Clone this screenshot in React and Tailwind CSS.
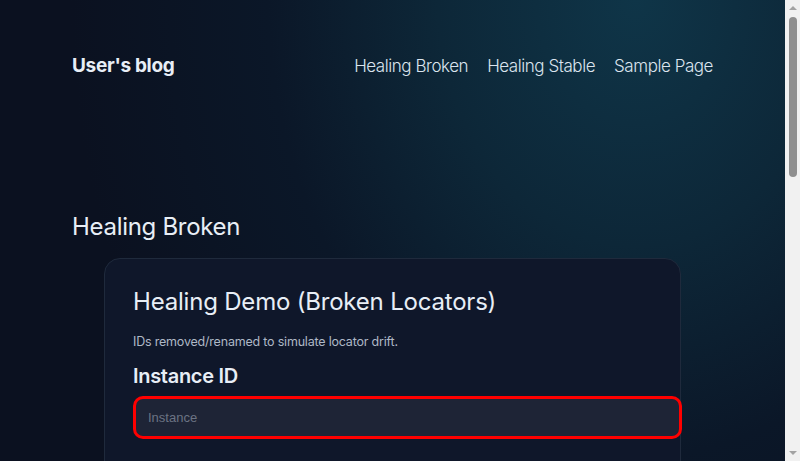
export default function App() {
  return (
    <div className="flex h-[461px] overflow-hidden">
      <div className="min-w-0 flex-1 min-h-[900px] bg-[#0b1120] bg-[radial-gradient(ellipse_72%_78%_at_81%_0%,#0f3548_0%,#0d2738_35%,#0b1728_65%,#0b1120_100%)] font-['Inter','Noto_Sans',sans-serif] text-[#e6edf5]">
        <div className="mx-[72px]">
          <header className="flex items-center justify-between h-[133px]">
            <a className="text-[19px] font-bold tracking-[-0.3px] text-[#e8eef6]">User's blog</a>
            <nav className="flex gap-[19px] text-[17px] font-light tracking-[-0.45px] text-[#dbe4ee]">
              <a>Healing Broken</a>
              <a>Healing Stable</a>
              <a>Sample Page</a>
            </nav>
          </header>
          <main className="pt-[76px]">
            <h1 className="text-[24px] font-normal tracking-[-0.3px] leading-[36px] text-[#e8eef6]">Healing Broken</h1>
            <section className="mx-8 mt-[13px] rounded-2xl border border-[#1f2a3c] bg-[#0f172a] px-[28px] pt-[26px] pb-10">
              <h2 className="text-[24px] font-normal tracking-[-0.2px] leading-[34px] text-[#e8eef6]">Healing Demo (Broken Locators)</h2>
              <p className="mt-[14px] text-[12.5px] tracking-[-0.2px] text-[#aeb8c6]">IDs removed/renamed to simulate locator drift.</p>
              <label className="block mt-[9px] text-[20px] font-semibold tracking-[-0.3px] text-[#e8eef6]">Instance ID</label>
              <input
                placeholder="Instance"
                className="mt-[5px] w-[549px] h-[43px] rounded-[10px] border-[3px] border-[#ff0000] bg-[#1e2436] px-[12px] font-['Liberation_Sans',Arial,sans-serif] text-[13px] text-white placeholder:text-[#6b7383] outline-none"
              />
            </section>
          </main>
        </div>
      </div>
      <div className="flex w-[15px] shrink-0 flex-col items-center bg-[#f1f1f1]">
        <div className="mt-[6px] h-0 w-0 border-x-[4px] border-b-[4px] border-x-transparent border-b-[#a3a3a3]" />
        <div className="mt-[7px] h-[160px] w-[8px] rounded-full bg-[#8f8f8f]" />
        <div className="mt-auto mb-[6px] h-0 w-0 border-x-[4px] border-t-[4px] border-x-transparent border-t-[#a3a3a3]" />
      </div>
    </div>
  )
}
